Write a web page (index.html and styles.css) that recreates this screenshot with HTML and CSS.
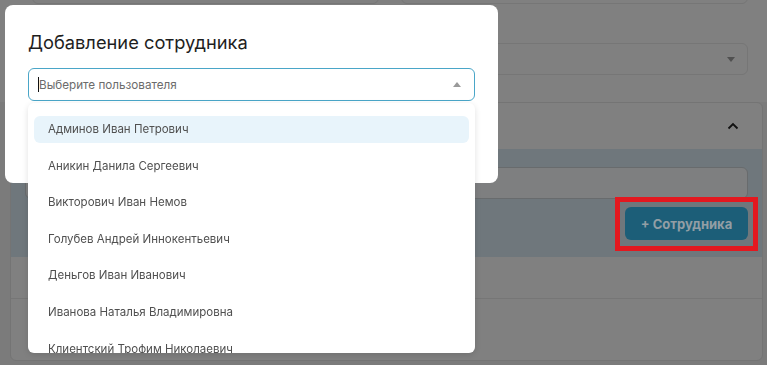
FILE: index.html
```html
<!DOCTYPE html>
<html lang="ru">
<head>
  <meta charset="UTF-8" />
  <title>Добавление сотрудника</title>
  <link rel="stylesheet" href="styles.css">
</head>
<body>

<!-- Page under the modal (dimmed) -->
<div class="top-section">
  <div class="field-row">
    <div class="field"></div>
    <div class="field"></div>
  </div>
  <div class="field-row second">
    <div></div>
    <div class="field select-field"><span class="down-arrow"></span></div>
  </div>
</div>

<div class="card">
  <div class="card-header">
    <svg class="chevron" width="12" height="8" viewBox="0 0 12 8">
      <path d="M1.5 6.5 L6 2 L10.5 6.5" fill="none" stroke="#111" stroke-width="1.8"/>
    </svg>
  </div>
  <div class="band">
    <div class="band-input"></div>
    <div class="btn-wrap">
      <button class="add-btn">+ Сотрудника</button>
      <div class="highlight"></div>
    </div>
  </div>
  <div class="card-row"></div>
</div>

<!-- Modal -->
<div class="modal">
  <h2 class="modal-title">Добавление сотрудника</h2>
  <div class="user-select">
    <span class="caret"></span>
    <span class="placeholder">Выберите пользователя</span>
    <span class="up-arrow"></span>
  </div>
  <ul class="dropdown">
    <li class="option active">Админов Иван Петрович</li>
    <li class="option">Аникин Данила Сергеевич</li>
    <li class="option">Викторович Иван Немов</li>
    <li class="option">Голубев Андрей Иннокентьевич</li>
    <li class="option">Деньгов Иван Иванович</li>
    <li class="option">Иванова Наталья Владимировна</li>
    <li class="option">Клиентский Трофим Николаевич</li>
  </ul>
</div>

</body>
</html>
```

FILE: styles.css
```css
body {
  margin: 0;
  background: #7b7b7b;
  font-family: Inter, 'Noto Sans', sans-serif;
  height: 365px;
  overflow: hidden;
}

/* dimmed page */
.top-section {
  display: flow-root;
  background: #808080;
  height: 102px;
  padding: 0 19px 0 32px;
}
.field-row {
  display: grid;
  grid-template-columns: 1fr 1fr;
  gap: 22px;
  margin-top: -28px;
}
.field-row.second {
  margin-top: 39px;
}
.field {
  height: 32px;
  border: 1px solid #767676;
  border-radius: 6px;
  box-sizing: border-box;
}
.select-field {
  height: 32px;
  display: flex;
  align-items: center;
  justify-content: flex-end;
  padding-right: 12px;
}
.down-arrow {
  width: 0;
  height: 0;
  border-left: 4px solid transparent;
  border-right: 4px solid transparent;
  border-top: 5px solid #505050;
}

.card {
  margin: 0 4px 0 10px;
  height: 259px;
  background: #808080;
  border: 1px solid #747474;
  border-radius: 6px;
  box-sizing: border-box;
  overflow: hidden;
}
.card-header {
  height: 46px;
  display: flex;
  align-items: center;
  justify-content: flex-end;
  padding-right: 23px;
}
.chevron {
  display: block;
}
.band {
  background: #6f777c;
  height: 108px;
  box-sizing: border-box;
  padding: 18px 14px 0 14px;
  display: flex;
  flex-direction: column;
  align-items: flex-end;
  gap: 8px;
}
.band-input {
  width: 100%;
  height: 32px;
  background: #7e7f80;
  border: 1px solid #686b6d;
  border-radius: 6px;
  box-sizing: border-box;
}
.btn-wrap {
  position: relative;
}
.add-btn {
  display: block;
  width: 123px;
  height: 33px;
  border: none;
  border-radius: 6px;
  background: #1c5e78;
  color: #929ea5;
  font-family: Inter, 'Noto Sans', sans-serif;
  font-weight: 700;
  font-size: 13px;
  padding: 0;
}
.highlight {
  position: absolute;
  top: -10px;
  left: -10px;
  right: -10px;
  bottom: -11px;
  border: 5px solid #e3181f;
}
.card-row {
  height: 41px;
  border-bottom: 1px solid #767676;
}

/* modal */
.modal {
  position: fixed;
  top: 5px;
  left: 5px;
  width: 493px;
  height: 178px;
  background: #fff;
  border-radius: 8px;
  box-sizing: border-box;
  padding: 0 23px;
}
.modal-title {
  margin: 0;
  padding-top: 24px;
  font-size: 18.3px;
  font-weight: 400;
  line-height: 26px;
  color: #1e1e1e;
}
.user-select {
  margin-top: 13px;
  height: 33px;
  border: 1px solid #4aa6c8;
  border-radius: 6px;
  box-sizing: border-box;
  display: flex;
  align-items: center;
  padding: 0 13px 0 9px;
}
.caret {
  width: 1px;
  height: 15px;
  background: #111;
}
.placeholder {
  flex: 1;
  font-size: 11.7px;
  color: #6b6b6b;
}
.up-arrow {
  width: 0;
  height: 0;
  border-left: 4px solid transparent;
  border-right: 4px solid transparent;
  border-bottom: 5px solid #9a9a9a;
}
.dropdown {
  position: absolute;
  top: 98px;
  left: 23px;
  width: 447px;
  height: 250px;
  margin: 0;
  padding: 13px 6px 0;
  list-style: none;
  box-sizing: border-box;
  background: #fff;
  border-radius: 6px;
  box-shadow: 0 2px 6px rgba(0,0,0,0.12);
  overflow: hidden;
}
.option {
  height: 27px;
  line-height: 27px;
  margin-bottom: 9.6px;
  padding-left: 14px;
  border-radius: 6px;
  font-size: 11.5px;
  color: #505050;
}
.option.active {
  background: #e8f4fb;
}
```
